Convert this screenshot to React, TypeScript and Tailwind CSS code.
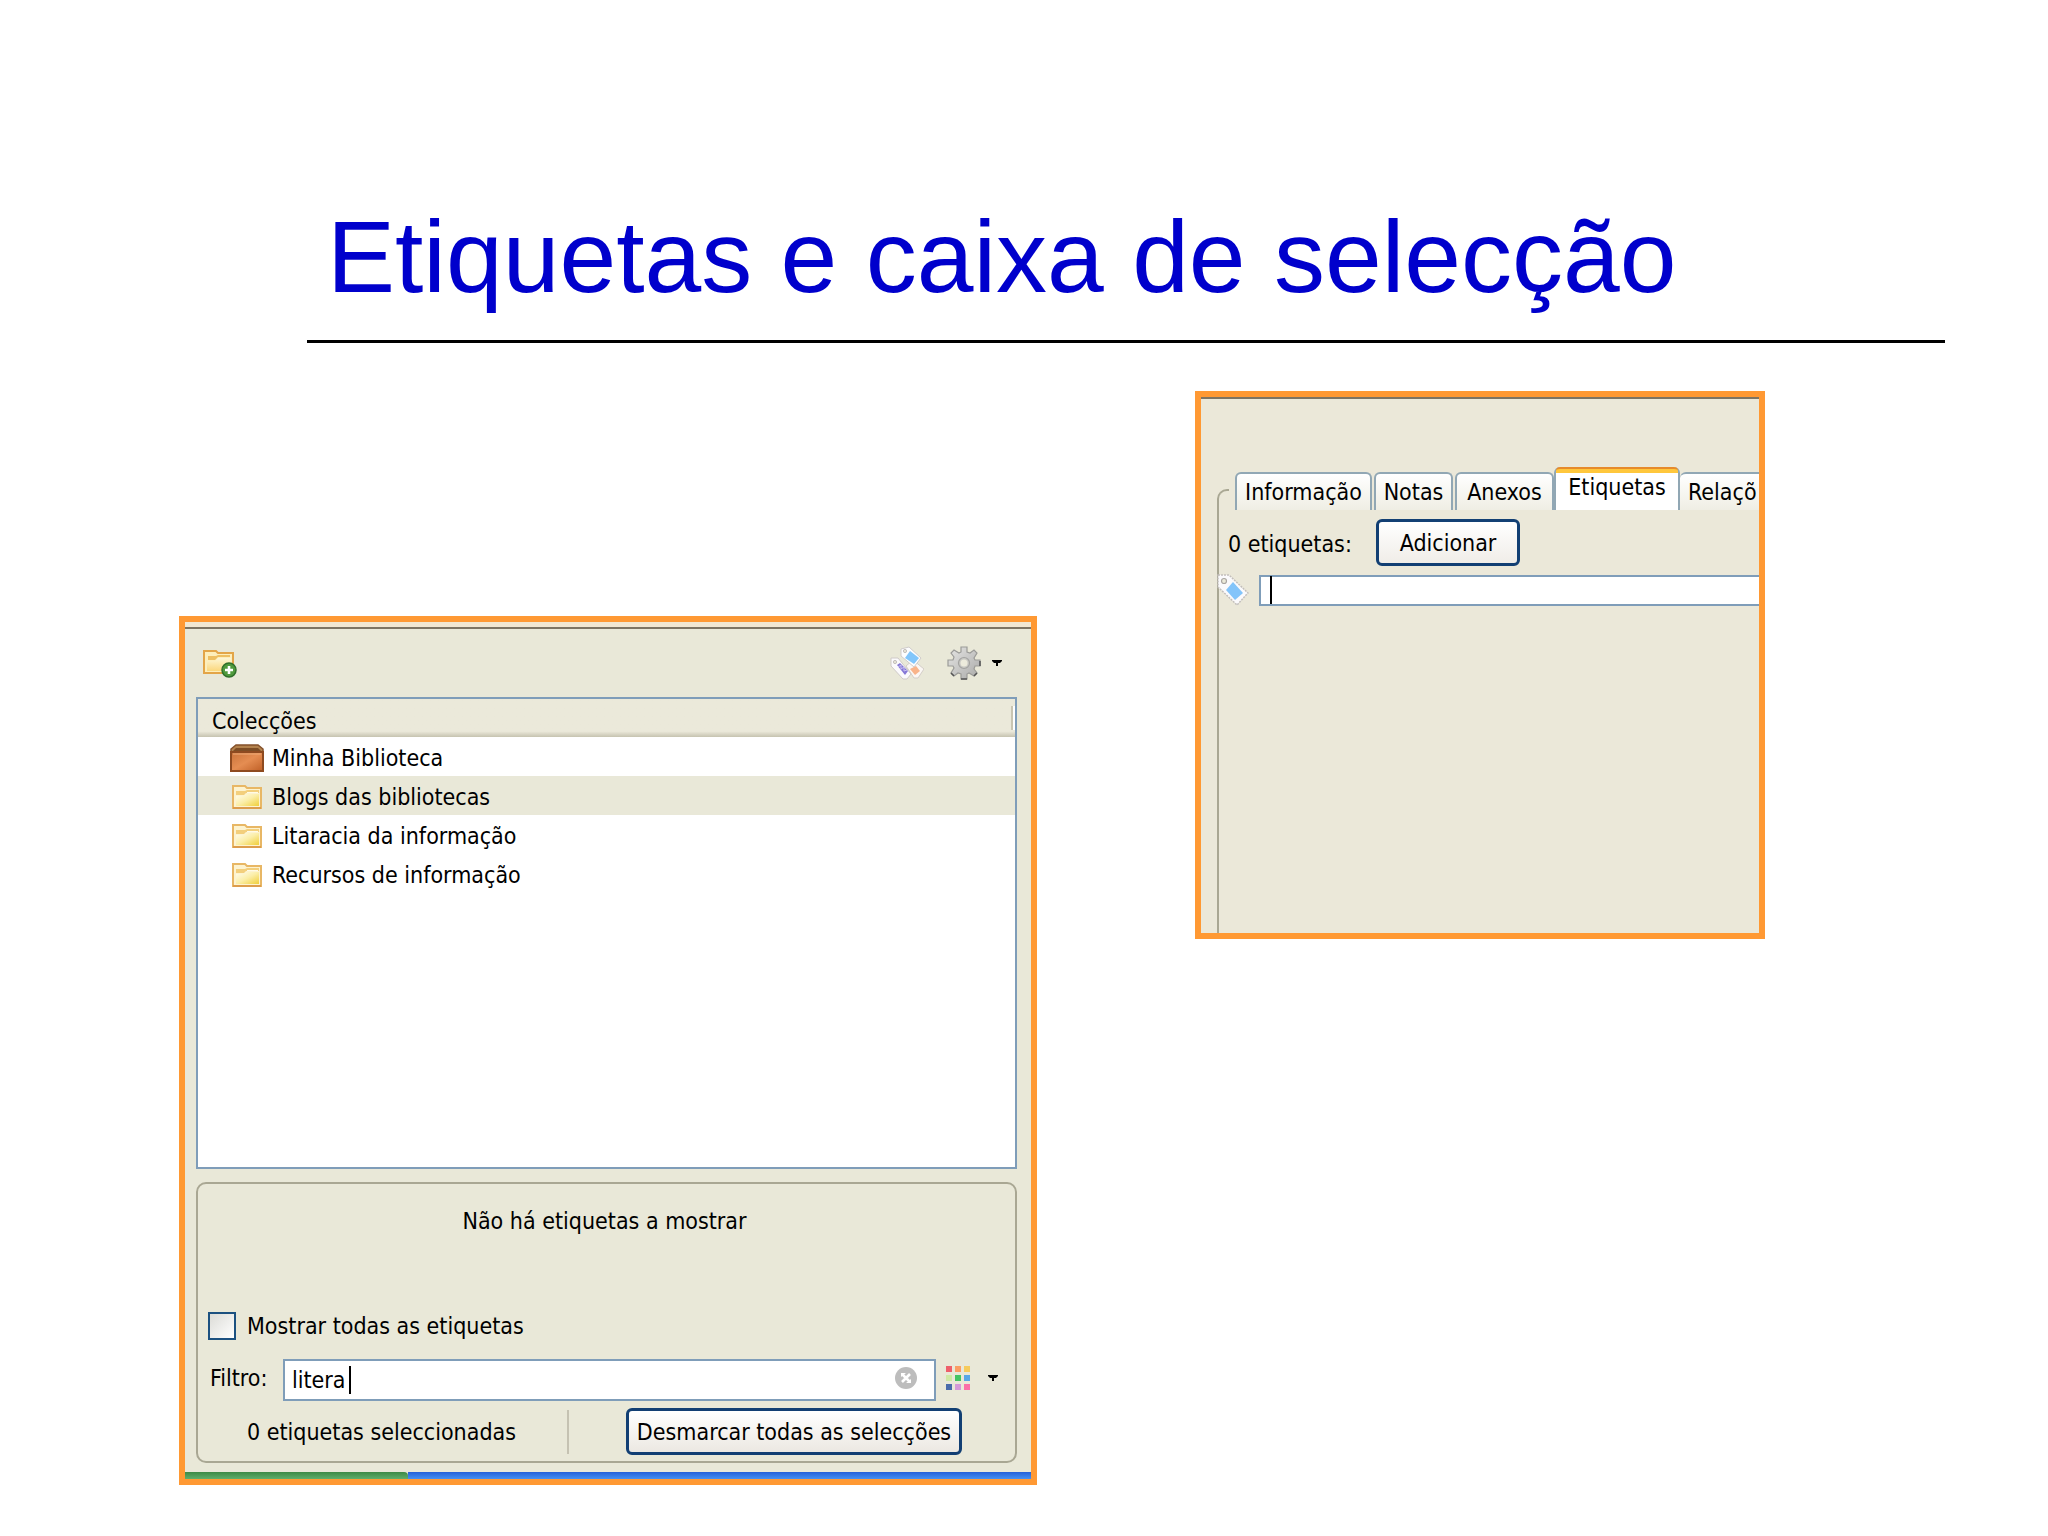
// ** React Import
import { useState } from "react"

// ** Type Import
import type { FC, ReactNode } from "react"

interface TabProps {
    label: string;
    className?: string;
}

interface CollectionType {
    name: string;
    library?: boolean;
}

const collections: CollectionType[] = [
    { name: "Minha Biblioteca", library: true },
    { name: "Blogs das bibliotecas" },
    { name: "Litaracia da informação" },
    { name: "Recursos de informação" },
]

const swatches = [
    "#ee5f6b", "#fb9d63", "#f6cb5c",
    "#cfe8a4", "#45c463", "#58a7e6",
    "#4a6cab", "#d59ad8", "#fb6fa8",
]

const FolderIcon: FC<{ id: string }> = ({ id }) => (
    <svg viewBox="0 0 30 24" className="h-6 w-[30px]" aria-hidden="true">
        <defs>
            <linearGradient id={id} x1="0" y1="0" x2="1" y2="1">
                <stop offset="0" stopColor="#fffdf0" />
                <stop offset="0.5" stopColor="#fbeea8" />
                <stop offset="1" stopColor="#f0cf3a" />
            </linearGradient>
        </defs>
        <path d="M1 1h12l2 2h14v20H1z" fill="#fdf3cf" stroke="#e8b765" strokeWidth="2" />
        <path d="M4 6h9l2-1h12v3H14l-2 2H4z" fill="#f3cf7c" />
        <path d="M15 7h11v1H15z" fill="#fffbe6" />
        <path d="M4 11h8l2-2h13v12H4z" fill={`url(#${id})`} />
        <path d="M1 23h28" stroke="#dd9d4c" strokeWidth="2" />
    </svg>
)

const NewCollectionIcon = () => (
    <svg viewBox="0 0 34 28" className="h-7 w-[34px]" aria-hidden="true">
        <defs>
            <linearGradient id="new-folder" x1="0" y1="0" x2="0" y2="1">
                <stop offset="0" stopColor="#fdf6d6" />
                <stop offset="1" stopColor="#fbd77c" />
            </linearGradient>
        </defs>
        <path d="M1 1h12l2 2h15v20H1z" fill="#fdeebb" stroke="#e3a548" strokeWidth="2" />
        <path d="M5 6h8l2-1h12v2H15l-3 3H5z" fill="#eebf62" />
        <path d="M4 11h8l3-3h13v13H4z" fill="url(#new-folder)" />
        <circle cx="26" cy="20" r="7" fill="#4f9a3c" stroke="#2f6f2a" strokeWidth="1.5" />
        <path d="M26 16v8M22 20h8" stroke="#fff" strokeWidth="2.6" />
    </svg>
)

const LibraryIcon = () => (
    <svg viewBox="0 0 34 28" className="h-7 w-[34px]" aria-hidden="true">
        <defs>
            <linearGradient id="library-front" x1="0" y1="0" x2="1" y2="1">
                <stop offset="0" stopColor="#c9733a" />
                <stop offset="0.5" stopColor="#e58d52" />
                <stop offset="1" stopColor="#bf5f26" />
            </linearGradient>
        </defs>
        <path d="M6 1h22l5 4v4H1V5z" fill="#b3824d" stroke="#84502a" strokeWidth="1.5" />
        <path d="M6 4h22l3 3H3z" fill="#7d4d25" />
        <path d="M1 8h32v19H1z" fill="url(#library-front)" stroke="#8e4a20" strokeWidth="2" />
        <path d="M3 10h28" stroke="#edab78" strokeWidth="1" />
    </svg>
)

const TagIcon = () => (
    <svg viewBox="0 0 32 32" className="h-8 w-8" aria-hidden="true">
        <path d="M1 1h11l19 18-11 12L1 13z" fill="#fbfafc" stroke="#c3bfbc" strokeWidth="1.5" strokeDasharray="2 1" />
        <circle cx="7" cy="7" r="2.5" fill="#ecead9" stroke="#aaa6a2" strokeWidth="1.2" />
        <path d="M16 8l10 11-8 7-9-10z" fill="#83c4fa" />
    </svg>
)

const TagsIcon = () => (
    <svg viewBox="0 0 34 34" className="h-[34px] w-[34px]" aria-hidden="true">
        <path d="M16 20l7-6 11 9-6 9h-4z" fill="#fbf7f4" stroke="#d3cdc8" />
        <path d="M20 23l6-3 4 5-5 4z" fill="#f9b48a" />
        <path d="M1 12h7l13 16-4 5h-4L1 20z" fill="#fbfafc" stroke="#cfcac8" />
        <circle cx="5" cy="16" r="1.6" fill="#e9e8d8" stroke="#c4bfbd" />
        <path d="M7 19l3-2 8 8-3 4z" fill="#8577d6" />
        <path d="M8 21l3-2v4l3-2v4l3-1" fill="none" stroke="#c8c1f2" />
        <path d="M11 3l8-2 12 11-7 9-13-11z" fill="#fdfdfe" stroke="#d0cccb" />
        <circle cx="15" cy="5" r="1.6" fill="#e9e8d8" stroke="#c4bfbd" />
        <path d="M20 5l9 7-5 6-9-6z" fill="#82c6fb" />
    </svg>
)

const GearIcon = () => (
    <svg viewBox="0 0 34 34" className="h-[34px] w-[34px]" aria-hidden="true">
        <defs>
            <linearGradient id="gear" x1="0" y1="0" x2="1" y2="1">
                <stop offset="0" stopColor="#e6e6e4" />
                <stop offset="1" stopColor="#a9a9a8" />
            </linearGradient>
        </defs>
        <path
            d="M14 1h6v5l3 1 4-3 3 3-3 5 1 2h5v6h-5l-1 3 3 4-3 3-5-3-2 1v5h-6v-5l-3-1-4 3-3-3 3-5-1-2H1v-6h5l1-3-3-4 3-3 5 3 2-1z"
            fill="url(#gear)"
            stroke="#9b9b98"
            strokeWidth="1.2"
        />
        <path d="M14 33h6M27 30l3-3M4 27l3 3M33 15v5" stroke="#555" strokeWidth="1.5" />
        <circle cx="17" cy="17" r="5.5" fill="#c9c9c4" stroke="#a3a3a0" strokeWidth="1.2" />
        <circle cx="17" cy="17" r="3.5" fill="#ecebdc" />
    </svg>
)

const CaretDown = () => (
    <svg viewBox="0 0 10 6" className="h-[6px] w-[10px]" aria-hidden="true">
        <path d="M0 0h10v1L8 3H6v3H4V3H2L0 1z" fill="#000" />
    </svg>
)

const Frame: FC<{ label: string; className?: string; children: ReactNode }> = ({ label, className, children }) => (
    <section aria-label={label} className={`border-6 border-[#ff9933] text-black ${className}`}>
        {children}
    </section>
)

const Tab: FC<TabProps> = ({ label, className }) => (
    <button
        type="button"
        role="tab"
        aria-selected={false}
        className={`h-[38px] rounded-t-[6px] border-2 border-b-0 border-[#91a7b4] bg-linear-to-b from-white to-[#efeee4] ${className}`}
    >
        {label}
    </button>
)

const CollectionsPanel = () => {
    const [selected, setSelected] = useState<string>("Blogs das bibliotecas")
    const [showAll, setShowAll] = useState<boolean>(false)
    const [filter, setFilter] = useState<string>("litera")

    return (
        <Frame label="Colecções" className="mt-[225px] bg-[#e9e8d8]">
            <div className="h-[7px] border-b-2 border-[#7d7463] bg-[#f1e7d2]" />
            <div className="flex flex-col pr-[14px] pl-[11px]">
                <div className="flex h-[68px] items-center pr-[15px] pl-[7px]">
                    <button type="button" aria-label="Nova colecção" className="mr-auto pt-[2px]">
                        <NewCollectionIcon />
                    </button>
                    <button type="button" aria-label="Selector de etiquetas" className="mr-[23px]">
                        <TagsIcon />
                    </button>
                    <button type="button" aria-label="Acções" className="flex items-center gap-[11px]">
                        <GearIcon />
                        <CaretDown />
                    </button>
                </div>

                <div className="min-h-[472px] border-2 border-[#7f9db9] bg-white">
                    <div className="flex h-[38px] items-center justify-between bg-linear-to-b from-[#ebe9da] from-85% to-[#c6c3b0] pt-[6px] pl-[14px]">
                        <span>Colecções</span>
                        <span className="mb-[6px] h-6 border-r-2 border-l-2 border-r-white border-l-[#c9c5b2]" />
                    </div>
                    <ul>
                        {collections.map((item) => (
                            <li key={item.name}>
                                <button
                                    type="button"
                                    onClick={() => setSelected(item.name)}
                                    className={`flex h-[39px] w-full items-center pt-[3px] pl-[32px] text-left ${selected === item.name ? "bg-[#e9e8d8]" : ""}`}
                                >
                                    <span className="mr-2 flex w-[34px] justify-center">
                                        {item.library ? <LibraryIcon /> : <FolderIcon id={item.name.split(" ")[0]} />}
                                    </span>
                                    {item.name}
                                </button>
                            </li>
                        ))}
                    </ul>
                </div>

                <div className="mt-[13px] mb-[9px] rounded-[10px] border-2 border-[#a9a793] px-[10px] pb-[6px]">
                    <p className="h-[121px] pt-[23px] pr-1 text-center">Não há etiquetas a mostrar</p>
                    <label className="flex h-[42px] items-center gap-[11px]">
                        <input
                            type="checkbox"
                            checked={showAll}
                            onChange={(e) => setShowAll(e.target.checked)}
                            className="h-7 w-7 appearance-none border-2 border-[#1c5180] bg-linear-to-br from-[#dcdcd7] to-white checked:bg-[#21a121]"
                        />
                        Mostrar todas as etiquetas
                    </label>
                    <div className="mt-3 flex items-center pr-[7px]">
                        <label htmlFor="filter" className="w-[75px] shrink-0 pb-1 pl-[2px]">Filtro:</label>
                        <div className="relative flex grow items-center">
                            <input
                                id="filter"
                                type="text"
                                value={filter}
                                onChange={(e) => setFilter(e.target.value)}
                                className="h-[42px] w-full border-2 border-[#7f9db9] bg-white pr-12 pl-[7px] outline-none"
                            />
                            <span className="absolute left-[66px] h-7 w-[2px] bg-black" />
                            <button type="button" aria-label="Limpar filtro" onClick={() => setFilter("")} className="absolute right-[19px] pb-1">
                                <svg viewBox="0 0 22 22" className="h-[22px] w-[22px]" aria-hidden="true">
                                    <circle cx="11" cy="11" r="11" fill="#bdbdbd" />
                                    <path d="M7 7l8 8M15 7l-8 8" stroke="#fff" strokeWidth="2.6" />
                                    <path d="M6 6h5L6 10zM16 12v4h-5z" fill="#fff" />
                                </svg>
                            </button>
                        </div>
                        <button type="button" aria-label="Cores" className="ml-[10px] flex items-center gap-[18px] pb-[5px]">
                            <svg viewBox="0 0 24 24" className="h-6 w-6" aria-hidden="true">
                                {swatches.map((color, index) => (
                                    <rect key={color} x={(index % 3) * 9} y={Math.floor(index / 3) * 9} width="6" height="6" fill={color} />
                                ))}
                            </svg>
                            <CaretDown />
                        </button>
                    </div>
                    <div className="mt-[7px] flex items-center pr-[43px]">
                        <span className="grow pr-3 text-center">0 etiquetas seleccionadas</span>
                        <span className="mr-[57px] h-11 border-l-2 border-[#c5c2b2]" />
                        <button
                            type="button"
                            className="h-[47px] w-[336px] rounded-[6px] border-[3px] border-[#123f73] bg-linear-to-b from-white to-[#ece8e2]"
                        >
                            Desmarcar todas as selecções
                        </button>
                    </div>
                </div>
            </div>
            <div className="flex h-[7px]">
                <span className="w-[223px] rounded-tr-[4px] bg-linear-to-b from-[#3c8a45] to-[#5fae6b]" />
                <span className="grow bg-linear-to-b from-[#2560d8] to-[#4690f2]" />
            </div>
        </Frame>
    )
}

const TagsPanel = () => {
    const [tag, setTag] = useState<string>("")

    return (
        <Frame label="Etiquetas" className="flex min-h-[548px] flex-col bg-[#ebe8d9]">
            <div className="h-[2px] bg-[#7d7463]" />
            <div className="mt-[68px] ml-[34px] flex items-end" role="tablist">
                <Tab label="Informação" className="mr-[2px] w-[137px]" />
                <Tab label="Notas" className="mr-[2px] w-[79px]" />
                <Tab label="Anexos" className="w-[99px]" />
                <button
                    type="button"
                    role="tab"
                    aria-selected={true}
                    className="flex h-[43px] w-[126px] flex-col rounded-t-[6px] border-x-2 border-[#91a7b4] bg-white"
                >
                    <span className="h-[6px] w-full rounded-t-[4px] border-t-2 border-[#e68b2c] bg-[#ffc73c]" />
                    <span className="w-full text-center">Etiquetas</span>
                </button>
                <Tab label="Relaçõ" className="min-w-0 grow rounded-tr-none border-r-0 border-l-0 pl-2 text-left" />
            </div>
            <div className="relative ml-4 flex grow flex-col">
                {/* group box edge, starts half way up the tabs */}
                <span className="absolute -top-[21px] bottom-0 left-0 w-3 rounded-tl-[10px] border-t-2 border-l-2 border-[#a9a793]" />
                <div className="mt-[9px] flex items-center pl-[11px]">
                    <span className="w-[148px] pt-[3px]">0 etiquetas:</span>
                    <button
                        type="button"
                        className="h-[47px] w-36 rounded-[6px] border-[3px] border-[#123f73] bg-linear-to-b from-white to-[#f0ede8]"
                    >
                        Adicionar
                    </button>
                </div>
                <div className="relative mt-2 flex items-center">
                    <TagIcon />
                    <input
                        type="text"
                        aria-label="Nova etiqueta"
                        value={tag}
                        onChange={(e) => setTag(e.target.value)}
                        className="ml-[10px] h-[31px] min-w-0 grow border-2 border-r-0 border-[#7f9db9] bg-white px-2 outline-none"
                    />
                    <span className="absolute left-[53px] h-7 w-[2px] bg-black" />
                </div>
            </div>
        </Frame>
    )
}

const App = () => (
    <main className="min-h-screen bg-white pt-[197px] pb-[51px] font-['DejaVu_Sans_Condensed','DejaVu_Sans',sans-serif] text-[23px] leading-7">
        <h1 className="mr-[103px] ml-[307px] border-b-3 border-black pb-[23px] pl-5 font-['Liberation_Sans',Arial,sans-serif] text-[102px] leading-[120px] text-[#0000cc]">
            Etiquetas e caixa de selecção
        </h1>
        <div className="mt-12 grid grid-cols-[858fr_570fr] items-start gap-x-[158px] pr-[283px] pl-[179px]">
            <CollectionsPanel />
            <TagsPanel />
        </div>
    </main>
)

export default App
